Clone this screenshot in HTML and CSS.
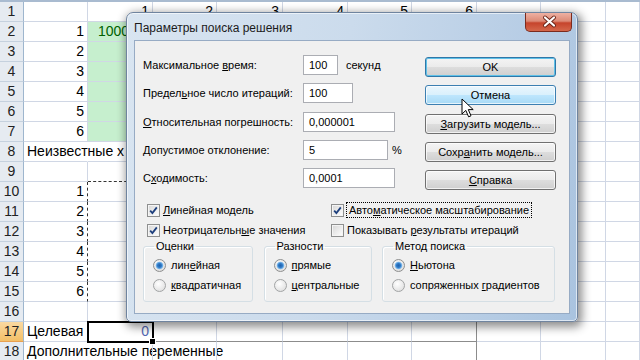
FILE: index.html
```html
<!DOCTYPE html>
<html lang="ru">
<head>
    <meta charset="utf-8">
    <title>Поиск решения</title>
    <link rel="stylesheet" href="styles.css">
</head>
<body>
<div class="sheet">
    <div class="colhead"></div>
    <div class="row"><span class="rh">1</span><span class="c"></span><span class="c n">1</span><span class="c n">2</span><span class="c n">3</span><span class="c n">4</span><span class="c n">5</span><span class="c n">6</span><span class="c"></span><span class="c"></span><span class="c"></span></div>
    <div class="row"><span class="rh">2</span><span class="c n">1</span><span class="c good big">1000</span><span class="c"></span><span class="c"></span><span class="c"></span><span class="c"></span><span class="c"></span><span class="c"></span><span class="c"></span><span class="c"></span></div>
    <div class="row"><span class="rh">3</span><span class="c n">2</span><span class="c good"></span><span class="c"></span><span class="c"></span><span class="c"></span><span class="c"></span><span class="c"></span><span class="c"></span><span class="c"></span><span class="c"></span></div>
    <div class="row"><span class="rh">4</span><span class="c n">3</span><span class="c good"></span><span class="c"></span><span class="c"></span><span class="c"></span><span class="c"></span><span class="c"></span><span class="c"></span><span class="c"></span><span class="c"></span></div>
    <div class="row"><span class="rh">5</span><span class="c n">4</span><span class="c good"></span><span class="c"></span><span class="c"></span><span class="c"></span><span class="c"></span><span class="c"></span><span class="c"></span><span class="c"></span><span class="c"></span></div>
    <div class="row"><span class="rh">6</span><span class="c n">5</span><span class="c good"></span><span class="c"></span><span class="c"></span><span class="c"></span><span class="c"></span><span class="c"></span><span class="c"></span><span class="c"></span><span class="c"></span></div>
    <div class="row"><span class="rh">7</span><span class="c n">6</span><span class="c good"></span><span class="c"></span><span class="c"></span><span class="c"></span><span class="c"></span><span class="c"></span><span class="c"></span><span class="c"></span><span class="c"></span></div>
    <div class="row"><span class="rh">8</span><span class="c spill">Неизвестные x</span><span class="c"></span><span class="c"></span><span class="c"></span><span class="c"></span><span class="c"></span><span class="c"></span><span class="c"></span><span class="c"></span><span class="c"></span></div>
    <div class="row"><span class="rh">9</span><span class="c"></span><span class="c ant-b"></span><span class="c ant-b"></span><span class="c"></span><span class="c"></span><span class="c"></span><span class="c"></span><span class="c"></span><span class="c"></span><span class="c"></span></div>
    <div class="row"><span class="rh">10</span><span class="c n ant-r">1</span><span class="c"></span><span class="c"></span><span class="c"></span><span class="c"></span><span class="c"></span><span class="c"></span><span class="c"></span><span class="c"></span><span class="c"></span></div>
    <div class="row"><span class="rh">11</span><span class="c n ant-r">2</span><span class="c"></span><span class="c"></span><span class="c"></span><span class="c"></span><span class="c"></span><span class="c"></span><span class="c"></span><span class="c"></span><span class="c"></span></div>
    <div class="row"><span class="rh">12</span><span class="c n ant-r">3</span><span class="c"></span><span class="c"></span><span class="c"></span><span class="c"></span><span class="c"></span><span class="c"></span><span class="c"></span><span class="c"></span><span class="c"></span></div>
    <div class="row"><span class="rh">13</span><span class="c n ant-r">4</span><span class="c"></span><span class="c"></span><span class="c"></span><span class="c"></span><span class="c"></span><span class="c"></span><span class="c"></span><span class="c"></span><span class="c"></span></div>
    <div class="row"><span class="rh">14</span><span class="c n ant-r">5</span><span class="c"></span><span class="c"></span><span class="c"></span><span class="c"></span><span class="c"></span><span class="c"></span><span class="c"></span><span class="c"></span><span class="c"></span></div>
    <div class="row"><span class="rh">15</span><span class="c n ant-r">6</span><span class="c"></span><span class="c"></span><span class="c"></span><span class="c"></span><span class="c"></span><span class="c"></span><span class="c"></span><span class="c"></span><span class="c"></span></div>
    <div class="row"><span class="rh">16</span><span class="c"></span><span class="c"></span><span class="c"></span><span class="c"></span><span class="c"></span><span class="c"></span><span class="c pb-r"></span><span class="c"></span><span class="c"></span><span class="c"></span></div>
    <div class="row"><span class="rh active">17</span><span class="c spill">Целевая</span><span class="c n sel">0</span><span class="c pb-b"></span><span class="c pb-b"></span><span class="c pb-b"></span><span class="c pb-b"></span><span class="c pb-b pb-r"></span><span class="c"></span><span class="c"></span><span class="c"></span></div>
    <div class="row"><span class="rh">18</span><span class="c spill">Дополнительные переменные</span><span class="c"></span><span class="c"></span><span class="c"></span><span class="c"></span><span class="c"></span><span class="c pb-r"></span><span class="c"></span><span class="c"></span><span class="c"></span></div>
</div>

<div class="dialog">
    <div class="titlebar">
        <span class="title">Параметры поиска решения</span>
        <span class="close">
            <svg width="47" height="19" viewBox="0 0 47 19">
                <path d="M19 5.5 L28 13.5 M28 5.5 L19 13.5" stroke="#6b2418" stroke-width="4" stroke-linecap="round"/>
                <path d="M19 5.5 L28 13.5 M28 5.5 L19 13.5" stroke="#fff" stroke-width="2.2" stroke-linecap="round"/>
            </svg>
        </span>
    </div>
    <div class="client">
        <div class="top">
            <div class="fields">
                <div class="field"><span class="lbl">Максимальное <u>в</u>ремя:</span><span class="inp w35">100</span><span class="unit">секунд</span></div>
                <div class="field"><span class="lbl">Предел<u>ь</u>ное число итераций:</span><span class="inp w50">100</span></div>
                <div class="field"><span class="lbl"><u>О</u>тносительная погрешность:</span><span class="inp w92">0,000001</span></div>
                <div class="field"><span class="lbl"><u>Д</u>опустимое отклонение:</span><span class="inp w85">5</span><span class="unit pct">%</span></div>
                <div class="field"><span class="lbl">С<u>х</u>одимость:</span><span class="inp w92">0,0001</span></div>
            </div>
            <div class="buttons">
                <button class="btn default">OK</button>
                <button class="btn hover">Отмена</button>
                <button class="btn"><u>З</u>агрузить модель...</button>
                <button class="btn">Сохр<u>а</u>нить модель...</button>
                <button class="btn"><u>С</u>правка</button>
            </div>
        </div>

        <div class="checks">
            <span class="chk"><i class="box on"></i><span><u>Л</u>инейная модель</span></span>
            <span class="chk"><i class="box on"></i><span class="focus">Авто<u>м</u>атическое масштабирование</span></span>
            <span class="chk"><i class="box on"></i><span>Неотрицательн<u>ы</u>е значения</span></span>
            <span class="chk"><i class="box"></i><span>Показывать <u>р</u>езультаты итераций</span></span>
        </div>

        <div class="groups">
            <fieldset class="group g1">
                <legend>Оценки</legend>
                <span class="opt"><i class="radio on"></i><span>лин<u>е</u>йная</span></span>
                <span class="opt"><i class="radio"></i><span><u>к</u>вадратичная</span></span>
            </fieldset>
            <fieldset class="group g2">
                <legend>Разности</legend>
                <span class="opt"><i class="radio on"></i><span><u>п</u>рямые</span></span>
                <span class="opt"><i class="radio"></i><span><u>ц</u>ентральные</span></span>
            </fieldset>
            <fieldset class="group g3">
                <legend>Метод поиска</legend>
                <span class="opt"><i class="radio on"></i><span><u>Н</u>ьютона</span></span>
                <span class="opt"><i class="radio"></i><span>сопряженных <u>г</u>радиентов</span></span>
            </fieldset>
        </div>
    </div>
</div>

<svg class="cursor" width="14" height="21" viewBox="0 0 14 21">
    <path d="M1 1 L1 16 L4.8 12.4 L7.6 18.8 L10 17.8 L7.3 11.6 L12.2 11.6 Z" fill="#fff" stroke="#000" stroke-width="1" stroke-linejoin="round"/>
</svg>
</body>
</html>
```

FILE: styles.css
```css
body {
    margin: 0;
    background: #ffffff;
    font-family: "Liberation Sans", Arial, sans-serif;
    overflow: hidden;
}

/* spreadsheet */

.sheet {
    width: 640px;
    height: 360px;
    overflow: hidden;
    font-size: 14px;
    color: #000;
}

.colhead {
    height: 2px;
    background: #a9bbd0;
}

.row {
    display: grid;
    grid-template-columns: 24px 64px 65px 64px 66px 65px 64px 65px 64px 65px 1fr;
    height: 20px;
}

.rh {
    background: #e6ebf1;
    border-right: 1px solid #9eb6ce;
    border-bottom: 1px solid #c5d1de;
    text-align: center;
    line-height: 19px;
    color: #222;
}

.rh.active {
    background: linear-gradient(#fad9a1, #f3bf67);
    border-bottom-color: #e8a050;
}

.c {
    border-right: 1px solid #d0d7e5;
    border-bottom: 1px solid #d0d7e5;
    line-height: 19px;
    padding: 0 3px;
    white-space: nowrap;
}

.n {
    text-align: right;
}

.spill {
    border-right-color: transparent;
}

.good {
    background: #c6efce;
    color: #006100;
}

.big {
    padding-left: 10px;
    overflow: hidden;
}

.ant-b {
    border-bottom: 1px dashed #333;
}

.ant-r {
    border-right: 1px dashed #333;
}

.pb-b {
    border-bottom-color: #8c8c8c;
}

.pb-r {
    border-right-color: #8c8c8c;
}

.sel {
    position: relative;
    outline: 2px solid #000;
    outline-offset: -1px;
    color: #5368b4;
}

.sel::after {
    content: "";
    position: absolute;
    right: -4px;
    bottom: -4px;
    width: 5px;
    height: 5px;
    background: #000;
    border: 1px solid #fff;
}

/* dialog */

.dialog {
    position: absolute;
    left: 126px;
    top: 12px;
    width: 452px;
    height: 310px;
    box-sizing: border-box;
    padding: 0 7px 7px;
    border: 1px solid #6f849f;
    border-radius: 7px 7px 5px 5px;
    background: linear-gradient(100deg, #d9e5f1 0%, #cbdbec 45%, #b7cde5 80%, #a9c3df 100%);
    box-shadow: 2px 3px 10px 2px rgba(0, 0, 0, 0.45), inset 0 0 0 1px rgba(255, 255, 255, 0.6);
    font-size: 11px;
    color: #000;
}

.titlebar {
    display: flex;
    height: 27px;
}

.title {
    align-self: center;
    padding-top: 3px;
    font-size: 12px;
    color: #1b1b1b;
}

.close {
    margin-left: auto;
    margin-right: -2px;
    width: 47px;
    height: 19px;
    box-sizing: border-box;
    border: 1px solid #7b2b1e;
    border-top: none;
    border-radius: 0 0 5px 5px;
    background: linear-gradient(#eeb1a3 0%, #dc8a76 45%, #c6442c 55%, #d4674b 100%);
}

.close svg {
    display: block;
    margin-top: -1px;
}

.client {
    width: 436px;
    height: 274px;
    box-sizing: border-box;
    border: 1px solid #97abc4;
    background: #f0f0f0;
}

.top {
    display: flex;
    height: 149px;
}

.fields {
    width: 290px;
    box-sizing: border-box;
    padding: 14px 0 0 8px;
    display: flex;
    flex-direction: column;
    gap: 8.25px;
}

.field {
    display: flex;
    align-items: center;
    height: 20px;
}

.lbl {
    width: 160px;
    flex: none;
}

.inp {
    height: 20px;
    box-sizing: border-box;
    border: 1px solid #abadb3;
    background: #fff;
    padding-left: 5px;
    line-height: 18px;
}

.w35 { width: 35px; }
.w50 { width: 50px; }
.w85 { width: 85px; }
.w92 { width: 92px; }

.unit {
    margin-left: 8px;
}

.unit.pct {
    margin-left: 4px;
}

.buttons {
    padding-top: 16px;
    display: flex;
    flex-direction: column;
    gap: 8.25px;
}

.btn {
    display: block;
    width: 131px;
    height: 20px;
    margin: 0;
    padding: 0;
    font: inherit;
    color: #000;
    border: 1px solid #707070;
    border-radius: 3px;
    background: linear-gradient(#f4f4f4 0%, #ebebeb 50%, #dddddd 51%, #cfcfcf 100%);
    box-shadow: inset 0 0 0 1px rgba(255, 255, 255, 0.7);
}

.btn.default {
    border-color: #2f77a8;
    box-shadow: inset 0 0 0 1px #5fc1e8;
}

.btn.hover {
    border-color: #3c7fb1;
    background: linear-gradient(#eaf6fd 0%, #d9f0fc 50%, #bee6fd 51%, #a7d9f5 100%);
}

/* checkboxes */

.checks {
    margin-top: 10px;
    padding-left: 12px;
    display: grid;
    grid-template-columns: 184px 1fr;
    grid-auto-rows: 20px;
}

.chk, .opt {
    display: flex;
    align-items: center;
    white-space: nowrap;
}

.box {
    width: 13px;
    height: 13px;
    box-sizing: border-box;
    margin-right: 3px;
    border: 1px solid #8e8f8f;
    background: linear-gradient(135deg, #d6d6d6, #ffffff);
    box-shadow: inset 0 0 0 1px #f4f4f4;
}

.box.on {
    background: url("data:image/svg+xml,%3Csvg xmlns='http://www.w3.org/2000/svg' width='11' height='11'%3E%3Cpath d='M2.2 5.6 L4.4 8 L8.8 2.4' fill='none' stroke='%231d3f7d' stroke-width='1.8'/%3E%3C/svg%3E") center no-repeat, linear-gradient(135deg, #d6d6d6, #ffffff);
}

.focus {
    outline: 1px dotted #000;
    padding: 1px 2px;
}

/* group boxes */

.groups {
    display: flex;
    gap: 10.5px;
    padding-left: 8px;
}

.group {
    margin: 0;
    padding: 2px 0 6px 9px;
    border: 1px solid #d5dfe5;
    border-radius: 3px;
    box-shadow: inset 1px 1px 0 #fff;
}

.group legend {
    padding: 0 2px;
    margin-left: 1px;
    line-height: 13px;
}

.g1 { width: 110px; box-sizing: border-box; }
.g2 { width: 108px; box-sizing: border-box; }
.g3 { width: 173px; box-sizing: border-box; }

.opt {
    height: 20px;
}

.radio {
    width: 13px;
    height: 13px;
    box-sizing: border-box;
    margin-right: 5px;
    border-radius: 50%;
    border: 1px solid #a2a4a5;
    background: radial-gradient(circle at 40% 35%, #ffffff, #d9d9d9);
}

.radio.on {
    border-color: #8e8f8f;
    background: radial-gradient(circle, #1f62ae 0, #2f79c5 2px, #7db9ec 3.4px, rgba(255, 255, 255, 0) 4.2px), radial-gradient(circle at 40% 35%, #ffffff, #d4d4d4);
}

.cursor {
    position: absolute;
    left: 461px;
    top: 98px;
}
```
